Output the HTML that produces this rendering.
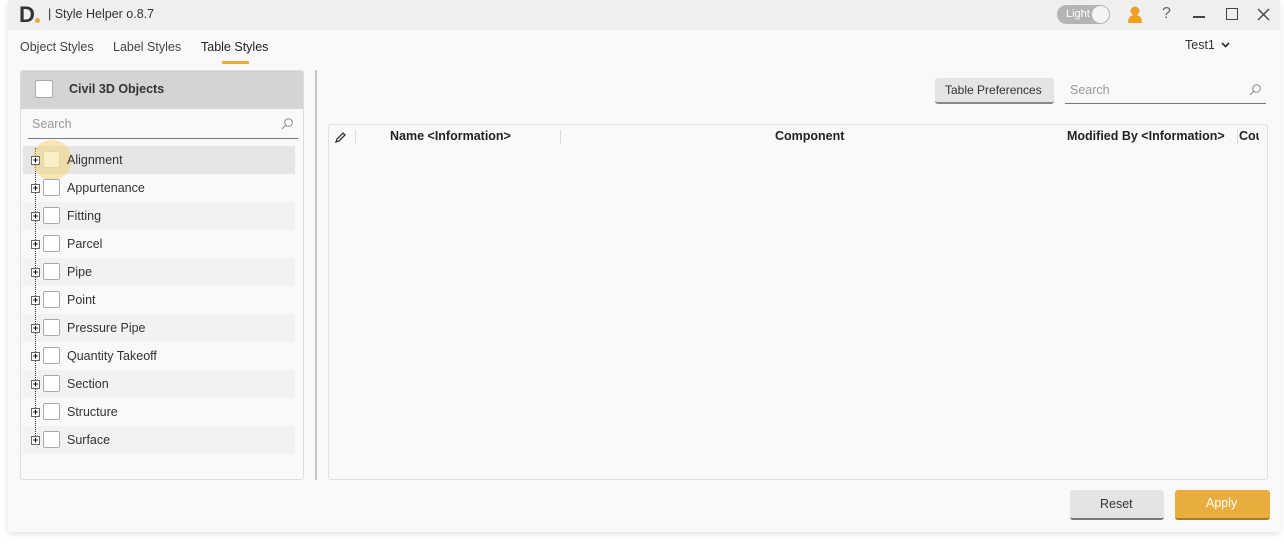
<!DOCTYPE html>
<html><head><meta charset="utf-8"><style>
*{box-sizing:border-box;margin:0;padding:0}
body{width:1284px;height:546px;background:#fff;font-family:"Liberation Sans",sans-serif;position:relative;overflow:hidden;color:#333}
.a{position:absolute}
.win{left:8px;top:0;width:1272px;height:532px;background:#f9f9f9;box-shadow:0 2px 6px rgba(0,0,0,.12)}
.tb{left:8px;top:0;width:1272px;height:30px;background:#efefef}
.t{font-size:12.5px;white-space:nowrap}
.row{left:23px;width:272px;height:28px}
.row.alt{background:#f2f2f2}
.cb{width:17px;height:17px;border:1px solid #aaa;background:#fff;border-radius:2px}
.pl{width:9px;height:9px;border:1px solid #666;background:#fff;font-size:9px;line-height:7px;text-align:center;color:#000;font-weight:bold}
</style></head><body>
<div class="a win"></div>
<div class="a tb"></div>
<div class="a" style="left:19px;top:2px;font-size:22px;font-weight:bold;color:#333">D</div>
<div class="a" style="left:35px;top:18px;width:5px;height:5px;border-radius:50%;background:#e8ad3c"></div>
<div class="a t" style="left:48px;top:7px;color:#333">| Style Helper o.8.7</div>
<div class="a" style="left:1057px;top:5px;width:53px;height:19px;border-radius:10px;background:#b4b4b4"></div>
<div class="a t" style="left:1066px;top:8px;font-size:11px;color:#fff">Light</div>
<div class="a" style="left:1092px;top:6px;width:17px;height:17px;border-radius:50%;background:#f4f4f4"></div>
<svg class="a" style="left:1127px;top:6px" width="16" height="17"><circle cx="8" cy="5" r="4.5" fill="#f0a020"/><path d="M1 17 Q1 9 8 9 Q15 9 15 17Z" fill="#f0a020"/></svg>
<div class="a t" style="left:1162px;top:5px;font-size:16px;color:#666">?</div>
<div class="a" style="left:1193px;top:16px;width:12px;height:1.5px;background:#444"></div>
<div class="a" style="left:1226px;top:8px;width:12px;height:12px;border:1.5px solid #444"></div>
<svg class="a" style="left:1257px;top:8px" width="13" height="13"><path d="M1 1L12 12M12 1L1 12" stroke="#444" stroke-width="1.4"/></svg>

<div class="a t" style="left:20px;top:40px;color:#444">Object Styles</div>
<div class="a t" style="left:113px;top:40px;color:#444">Label Styles</div>
<div class="a t" style="left:201px;top:40px;color:#222">Table Styles</div>
<div class="a" style="left:222px;top:61px;width:27px;height:3px;background:#e8ad3c"></div>
<div class="a t" style="left:1185px;top:38px;color:#333">Test1</div>
<svg class="a" style="left:1221px;top:42px" width="9" height="6"><path d="M1 1L4.5 4.5L8 1" stroke="#333" stroke-width="1.8" fill="none"/></svg>

<div class="a" style="left:20px;top:70px;width:284px;height:410px;border:1px solid #ddd;border-radius:3px;background:#f9f9f9"></div>
<div class="a" style="left:21px;top:71px;width:282px;height:38px;background:#d4d4d4"></div>
<div class="a cb" style="left:35px;top:80px;width:18px;height:18px"></div>
<div class="a t" style="left:69px;top:82px;font-weight:bold;color:#333">Civil 3D Objects</div>
<div class="a t" style="left:32px;top:117px;color:#999">Search</div>
<svg class="a" style="left:281px;top:118px" width="12" height="12"><circle cx="7.5" cy="4.5" r="3.8" stroke="#888" fill="none"/><path d="M5 7L1 11" stroke="#888"/></svg>
<div class="a" style="left:28px;top:138px;width:270px;height:1px;background:#777"></div>

<div class="a row" style="top:146px;background:#e6e6e6"></div>
<div class="a row" style="top:174px"></div>
<div class="a row alt" style="top:202px"></div>
<div class="a row" style="top:230px"></div>
<div class="a row alt" style="top:258px"></div>
<div class="a row" style="top:286px"></div>
<div class="a row alt" style="top:314px"></div>
<div class="a row" style="top:342px"></div>
<div class="a row alt" style="top:370px"></div>
<div class="a row" style="top:398px"></div>
<div class="a row alt" style="top:426px"></div>
<div class="a" style="left:35px;top:148px;width:0;height:296px;border-left:1px dotted #333"></div>
<div class="a" style="left:32px;top:140px;width:40px;height:40px;border-radius:50%;background:rgba(245,210,110,.5)"></div>

<div class="a pl" style="left:31px;top:156px">+</div><div class="a cb" style="left:43px;top:151px;background:#fbefc8;border-color:#e2d6a8"></div><div class="a t" style="left:67px;top:153px">Alignment</div>
<div class="a pl" style="left:31px;top:184px">+</div><div class="a cb" style="left:43px;top:179px"></div><div class="a t" style="left:67px;top:181px">Appurtenance</div>
<div class="a pl" style="left:31px;top:212px">+</div><div class="a cb" style="left:43px;top:207px"></div><div class="a t" style="left:67px;top:209px">Fitting</div>
<div class="a pl" style="left:31px;top:240px">+</div><div class="a cb" style="left:43px;top:235px"></div><div class="a t" style="left:67px;top:237px">Parcel</div>
<div class="a pl" style="left:31px;top:268px">+</div><div class="a cb" style="left:43px;top:263px"></div><div class="a t" style="left:67px;top:265px">Pipe</div>
<div class="a pl" style="left:31px;top:296px">+</div><div class="a cb" style="left:43px;top:291px"></div><div class="a t" style="left:67px;top:293px">Point</div>
<div class="a pl" style="left:31px;top:324px">+</div><div class="a cb" style="left:43px;top:319px"></div><div class="a t" style="left:67px;top:321px">Pressure Pipe</div>
<div class="a pl" style="left:31px;top:352px">+</div><div class="a cb" style="left:43px;top:347px"></div><div class="a t" style="left:67px;top:349px">Quantity Takeoff</div>
<div class="a pl" style="left:31px;top:380px">+</div><div class="a cb" style="left:43px;top:375px"></div><div class="a t" style="left:67px;top:377px">Section</div>
<div class="a pl" style="left:31px;top:408px">+</div><div class="a cb" style="left:43px;top:403px"></div><div class="a t" style="left:67px;top:405px">Structure</div>
<div class="a pl" style="left:31px;top:436px">+</div><div class="a cb" style="left:43px;top:431px"></div><div class="a t" style="left:67px;top:433px">Surface</div>

<div class="a" style="left:315px;top:70px;width:2px;height:410px;background:#c8c8c8"></div>

<div class="a" style="left:935px;top:78px;width:119px;height:26px;background:#e4e4e4;border-radius:3px;border-bottom:2px solid #888"></div>
<div class="a t" style="left:945px;top:83px;color:#333;font-size:12px">Table Preferences</div>
<div class="a t" style="left:1070px;top:83px;color:#999">Search</div>
<svg class="a" style="left:1249px;top:84px" width="12" height="12"><circle cx="7.5" cy="4.5" r="3.8" stroke="#888" fill="none"/><path d="M5 7L1 11" stroke="#888"/></svg>
<div class="a" style="left:1065px;top:103px;width:201px;height:1px;background:#777"></div>

<div class="a" style="left:328px;top:124px;width:940px;height:356px;border:1px solid #e0e0e0;border-radius:3px;background:#f9f9f9"></div>
<svg class="a" style="left:334px;top:131px" width="13" height="13"><path d="M2 11L3 8L9 2L11 4L5 10Z" stroke="#333" stroke-width="1.3" fill="none"/></svg>
<div class="a" style="left:355px;top:130px;width:1px;height:14px;background:#ddd"></div>
<div class="a t" style="left:390px;top:129px;font-weight:bold;color:#222">Name &lt;Information&gt;</div>
<div class="a" style="left:560px;top:130px;width:1px;height:14px;background:#ddd"></div>
<div class="a t" style="left:775px;top:129px;font-weight:bold;color:#222">Component</div>
<div class="a t" style="left:1067px;top:129px;font-weight:bold;color:#222">Modified By &lt;Information&gt;</div>
<div class="a" style="left:1237px;top:130px;width:1px;height:14px;background:#ddd"></div>
<div class="a t" style="left:1239px;top:129px;font-weight:bold;color:#222;width:20px;overflow:hidden">Cou</div>

<div class="a" style="left:1070px;top:490px;width:94px;height:30px;background:#e4e4e4;border-radius:3px;border-bottom:2px solid #777"></div>
<div class="a t" style="left:1100px;top:497px;color:#333">Reset</div>
<div class="a" style="left:1175px;top:490px;width:95px;height:30px;background:#e8ad3c;border-radius:3px;border-bottom:2px solid #a77a2a"></div>
<div class="a t" style="left:1206px;top:496px;color:#fff">Apply</div>
</body></html>
